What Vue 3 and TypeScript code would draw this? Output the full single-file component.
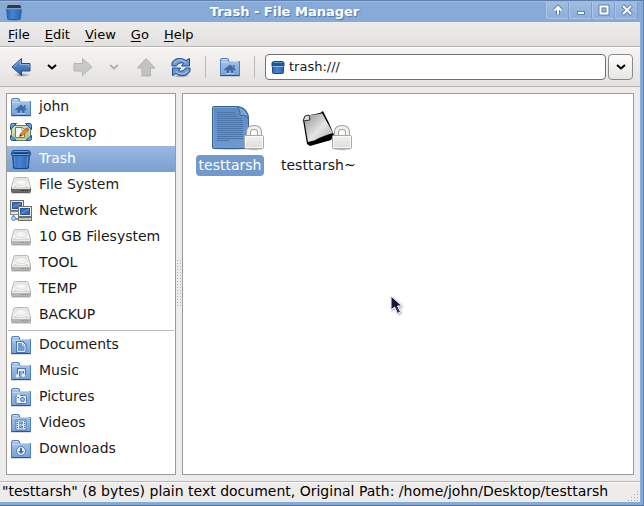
<script setup lang="ts">
import { ref } from 'vue'

interface Place {
  label: string
  icon: string
}

interface FileItem {
  name: string
  icon: string
}

const menus: string[] = ['File', 'Edit', 'View', 'Go', 'Help']

const places: Place[] = [
  { label: 'john', icon: 'home' },
  { label: 'Desktop', icon: 'desktop' },
  { label: 'Trash', icon: 'trash' },
  { label: 'File System', icon: 'drive-dark' },
  { label: 'Network', icon: 'network' },
  { label: '10 GB Filesystem', icon: 'drive' },
  { label: 'TOOL', icon: 'drive' },
  { label: 'TEMP', icon: 'drive' },
  { label: 'BACKUP', icon: 'drive' },
]

const bookmarks: Place[] = [
  { label: 'Documents', icon: 'documents' },
  { label: 'Music', icon: 'music' },
  { label: 'Pictures', icon: 'pictures' },
  { label: 'Videos', icon: 'videos' },
  { label: 'Downloads', icon: 'downloads' },
]

const files: FileItem[] = [
  { name: 'testtarsh', icon: 'text-file' },
  { name: 'testtarsh~', icon: 'backup-file' },
]

const activePlace = ref('Trash')
const activeFile = ref('testtarsh')
const location = ref('trash:///')
</script>

<template>
  <div class="window">
    <svg class="sprites" width="0" height="0" aria-hidden="true">
      <defs>
        <linearGradient id="g-folder" x1="0" y1="0" x2="0" y2="1">
          <stop offset="0" stop-color="#a9c6e8" />
          <stop offset="1" stop-color="#76a1d5" />
        </linearGradient>
        <linearGradient id="g-blue" x1="0" y1="0" x2="0" y2="1">
          <stop offset="0" stop-color="#6c9cd4" />
          <stop offset="1" stop-color="#2a5ea6" />
        </linearGradient>
        <linearGradient id="g-bin" x1="0" y1="0" x2="1" y2="0">
          <stop offset="0" stop-color="#2c66b4" />
          <stop offset=".4" stop-color="#4684cf" />
          <stop offset="1" stop-color="#2a62b0" />
        </linearGradient>
        <linearGradient id="g-drive" x1="0" y1="0" x2="0" y2="1">
          <stop offset="0" stop-color="#e4e4e3" />
          <stop offset="1" stop-color="#f7f7f6" />
        </linearGradient>
        <linearGradient id="g-doc" x1="0" y1="0" x2="0" y2="1">
          <stop offset="0" stop-color="#5b8bc4" />
          <stop offset="1" stop-color="#6d9bd0" />
        </linearGradient>
        <linearGradient id="g-lock" x1="0" y1="0" x2="0" y2="1">
          <stop offset="0" stop-color="#f3f3f2" />
          <stop offset="1" stop-color="#dcddda" />
        </linearGradient>
        <linearGradient id="g-paper" x1="0" y1="0" x2="1" y2="1">
          <stop offset="0" stop-color="#8d8d8d" />
          <stop offset=".55" stop-color="#e4e4e4" />
          <stop offset="1" stop-color="#a8a8a8" />
        </linearGradient>
        <radialGradient id="g-shade">
          <stop offset="0" stop-color="#000" stop-opacity=".4" />
          <stop offset="1" stop-color="#000" stop-opacity="0" />
        </radialGradient>
      </defs>

      <symbol id="folder" viewBox="0 0 22 22">
        <path d="M1 20.5h20" stroke="#000" stroke-opacity=".14" />
        <path d="M1.500 5.500V4Q1.500 2.500 3 2.500H8Q9.500 2.500 9.500 4V5.500H20.500V19.500H1.500Z" fill="url(#g-folder)" stroke="#4d80be" />
        <path d="M2.500 7V6.500H9l1.500-1H19.500" fill="none" stroke="#c2d8f0" />
        <path d="M3 3.500h5" stroke="#c8dcf2" />
        <path d="M1.500 19.500h19" stroke="#28559a" />
      </symbol>

      <symbol id="home" viewBox="0 0 22 22">
        <use href="#folder" width="22" height="22" />
        <path d="M5 13.500l6-5 6 5-1 1L14.500 13.500v3.500h-2.500V14.500h-2v2.500H7.500V13.500l-1.500 1z" fill="#3f6ba6" />
        <path d="M14 9h1.500v3L14 11z" fill="#3f6ba6" />
        <path d="M7 17.500h8" stroke="#bcd4ee" />
      </symbol>

      <symbol id="desktop" viewBox="0 0 22 22">
        <rect x="1.500" y="3.500" width="19" height="15" rx="1" fill="#d0dcb0" stroke="#6a7c60" />
        <path d="M3 13Q8 7 19 5V17H3Z" fill="#b4cc8c" />
        <path d="M5.500 5.500h7l2 2v8h-9z" fill="#fbfbfa" stroke="#777" />
        <path d="M12 6v2.500h2.500" fill="none" stroke="#999" />
        <path d="M9.500 14.500l1-3 5.500-5 2 2.200-5.500 5z" fill="#f28a1c" stroke="#a65608" stroke-width=".6" />
        <path d="M9.500 14.500l.8-2.200 1.500 1.500z" fill="#3b2a12" />
        <path d="M16 6.500l2 2.200 1.200-1.200-2-2z" fill="#e34a2a" />
        <path d="M.5 7.500v-4q0-2 2-2h4zM15.500 1.500h4q2 0 2 2v4zM.5 13.500v3q0 2 2 2h4zM21.500 13.500v3q0 2-2 2h-4z" fill="#6f9fdb" stroke="#1f4f94" stroke-linejoin="round" />
      </symbol>

      <symbol id="trash" viewBox="0 0 22 22">
        <ellipse cx="11" cy="20" rx="10.500" ry="1.800" fill="url(#g-shade)" />
        <path d="M2.500 6L3.500 19Q3.500 20.500 5 20.500H17Q18.500 20.500 18.500 19L19.500 6Z" fill="url(#g-bin)" stroke="#1c4886" />
        <path d="M4.500 8L5 18.500M17.500 8L17 18.500" stroke="#77a9e4" stroke-opacity=".7" />
        <path d="M3.500 2.500H18.500Q19.500 2.500 20 4L20.500 6Q20.500 7.500 19.500 7.500H2.500Q1.500 7.500 1.500 6L2 4Q2.500 2.500 3.500 2.500Z" fill="#2c5c9e" stroke="#1c4886" />
        <path d="M4 5.500h14" stroke="#173f7a" stroke-width="2" />
        <path d="M3.500 3.500h15M2.500 6.500h17" stroke="#6c9fda" />
      </symbol>

      <symbol id="trash-title" viewBox="0 0 18 18">
        <ellipse cx="9" cy="16.500" rx="8" ry="1.500" fill="url(#g-shade)" />
        <path d="M1.500 4.500L2.500 15Q2.500 16.500 4 16.500H14Q15.500 16.500 15.500 15L16.500 4.500Z" fill="url(#g-bin)" stroke="#2c60a8" />
        <path d="M2.500 1.500H15.500L17 5.500H1Z" fill="#1e3a66" stroke="#a2a9b2" />
        <path d="M1 6h16" stroke="#5b91d4" />
      </symbol>

      <symbol id="trash-small" viewBox="0 0 16 16">
        <path d="M2.500 7.500V13.500Q2.500 14.500 3.500 14.500H12.500Q13.500 14.500 13.500 13.500V7.500Z" fill="url(#g-bin)" stroke="#1d4b8c" />
        <path d="M3.500 2.500H12.500Q13.500 2.500 14 4V7.500H2V4Q2.500 2.500 3.500 2.500Z" fill="#27558f" stroke="#1d4b8c" />
        <path d="M3.500 3.500h9" stroke="#6093cf" />
        <path d="M2.500 7.500h11" stroke="#8db9ec" />
      </symbol>

      <symbol id="drive-body" viewBox="0 0 22 22">
        <path d="M1 19.500h20" stroke="#000" stroke-opacity=".14" />
        <path d="M4 4Q4.200 3.500 5.500 3.500H16.500Q17.800 3.500 18 4L20.500 13V14H1.500V13Z" fill="url(#g-drive)" stroke="#b8b8b6" />
        <ellipse cx="11" cy="8.500" rx="5.500" ry="3" fill="#f5f5f4" stroke="#dededd" />
        <path d="M4.500 12.500h2M15.500 12.500h2" stroke="#cfcfcd" />
      </symbol>

      <symbol id="drive" viewBox="0 0 22 22">
        <use href="#drive-body" width="22" height="22" />
        <path d="M1.500 14.500h19v3q0 1-1 1h-17q-1 0-1-1z" fill="#b5b6b4" stroke="#a5a6a4" />
        <path d="M2 14.500h18" stroke="#ececeb" />
        <path d="M11 16.500h8" stroke="#8a8b89" stroke-dasharray="1 1" />
      </symbol>

      <symbol id="drive-dark" viewBox="0 0 22 22">
        <use href="#drive-body" width="22" height="22" />
        <path d="M1.500 14.500h19v3q0 1-1 1h-17q-1 0-1-1z" fill="#6b6c6a" stroke="#5c5d5b" />
        <path d="M2 14.500h18" stroke="#dcdcda" />
        <path d="M11 16.500h8" stroke="#262726" stroke-dasharray="1 1" />
      </symbol>

      <symbol id="network" viewBox="0 0 22 22">
        <rect x=".5" y=".5" width="13" height="10" fill="#e8e8e4" stroke="#6d6f6b" />
        <rect x="2.500" y="2.500" width="9" height="6" fill="#3a6db5" stroke="#2a559a" />
        <path d="M3 7L11 3" stroke="#6d9ddc" />
        <rect x=".5" y="11.500" width="9" height="3" fill="#e6e6e1" stroke="#8b8c88" />
        <path d="M3.500 15v4H8" fill="none" stroke="#6d9bd4" stroke-width="2" />
        <circle cx="3.500" cy="18.500" r="2" fill="#bcd6f4" stroke="#5585c3" />
        <rect x="8.500" y="6.500" width="13" height="10" fill="#f0f0ec" stroke="#6d6f6b" />
        <rect x="10.500" y="8.500" width="9" height="6" fill="#3a6db5" stroke="#2a559a" />
        <path d="M11 13.500L19 9" stroke="#6d9ddc" />
        <rect x="8.500" y="17.500" width="13" height="3" fill="#dfe0d8" stroke="#6d6f6b" />
        <path d="M10 19h10" stroke="#a3a59c" />
      </symbol>

      <symbol id="documents" viewBox="0 0 22 22">
        <use href="#folder" width="22" height="22" />
        <path d="M7.500 8.500h5l2.500 2.500v6.500h-7.500z" fill="#9dbfe5" stroke="#4b78b2" stroke-width="3" />
        <path d="M7.500 8.500h5l2.500 2.500v6.500h-7.500zM12.500 8.500v2.500H15" fill="#6e9bd0" stroke="#e4eefa" />
      </symbol>

      <symbol id="music" viewBox="0 0 22 22">
        <use href="#folder" width="22" height="22" />
        <path d="M8.500 16V9.500h6V15" fill="none" stroke="#4b78b2" stroke-width="3" />
        <path d="M8.500 16V9.500h6V15M8.500 10.500h6" fill="none" stroke="#e4eefa" />
        <circle cx="7.300" cy="16" r="1.700" fill="#e4eefa" />
        <circle cx="13.300" cy="15.300" r="1.700" fill="#e4eefa" />
      </symbol>

      <symbol id="pictures" viewBox="0 0 22 22">
        <use href="#folder" width="22" height="22" />
        <rect x="6" y="9.500" width="10.500" height="8" rx="1" fill="#e4eefa" stroke="#4d7cb6" />
        <path d="M7 9.500h3" stroke="#e4eefa" stroke-width="2" />
        <circle cx="12.500" cy="13.500" r="2" fill="#a9c6e8" stroke="#3e6eab" />
        <path d="M7.500 11.500h1.500" stroke="#3e6eab" />
      </symbol>

      <symbol id="videos" viewBox="0 0 22 22">
        <use href="#folder" width="22" height="22" />
        <rect x="6" y="8" width="10" height="10" fill="#e4eefa" stroke="#4d7cb6" />
        <path d="M9 9.500h4v3H9zM9 13.500h4v3H9z" fill="#6795cc" />
        <path d="M7.500 9v8M14.500 9v8" stroke="#3e6eab" stroke-dasharray="1 1" />
      </symbol>

      <symbol id="downloads" viewBox="0 0 22 22">
        <use href="#folder" width="22" height="22" />
        <circle cx="11" cy="13" r="4.500" fill="#e4eefa" stroke="#4d7cb6" />
        <path d="M10 10h2v3h2l-3 3-3-3h2z" fill="#3e6eab" />
      </symbol>

      <symbol id="lock" viewBox="0 0 22 26">
        <ellipse cx="11" cy="24" rx="11" ry="1.800" fill="url(#g-shade)" />
        <path d="M5.500 12V7Q5.500 2.500 11 2.500T16.500 7V12" fill="none" stroke="#a2a3a0" stroke-width="5" />
        <path d="M5.500 12V7Q5.500 2.500 11 2.500T16.500 7V12" fill="none" stroke="#f0f0ee" stroke-width="3" />
        <rect x="1.500" y="10.500" width="19" height="13" rx="1" fill="url(#g-lock)" stroke="#a9aaa7" />
        <path d="M2.500 11.500h17v11h-17z" fill="none" stroke="#f8f8f7" />
      </symbol>

      <symbol id="text-file" viewBox="0 0 54 48">
        <ellipse cx="20" cy="43.500" rx="20" ry="2" fill="url(#g-shade)" />
        <path d="M2.500 1.500H27Q37.500 3 37.500 14V43.500H2.500Q1.500 43.500 1.500 42.500V2.500Q1.500 1.500 2.500 1.500Z" fill="url(#g-doc)" stroke="#37608f" />
        <path d="M2.500 42V2.500H27" fill="none" stroke="#7ba5d6" />
        <path d="M6 7.500H24M6 9.500H25M6 11.500H27M6 13.500H31M6 15.500H32M6 17.500H32M6 19.500H32M6 21.500H32M6 23.500H32M6 25.500H32M6 27.500H32M6 29.500H32M6 31.500H32M6 33.500H32M6 35.500H18" stroke="#4a76a9" />
        <path d="M25.500 1.500Q29.500 4 29 10.500Q36.500 9.500 37.500 14Q37 3 25.500 1.500Z" fill="#7aa5d6" stroke="#3c6798" />
        <use href="#lock" x="32" y="20" width="22" height="26" />
      </symbol>

      <symbol id="backup-file" viewBox="0 0 54 48">
        <path d="M4 15L8 39L11 41L32 35L35 30L30 18L24 6L21 8L6 11Z" fill="#000" />
        <path d="M5 14L10 10L21 9L23 8L34 28L29 32L9 37Z" fill="url(#g-paper)" />
        <path d="M34 28Q24 31 18 34L11 40L31 35Z" fill="#000" />
        <path d="M4 16L6 11L10 10L11 15Z" fill="#dedede" stroke="#333" />
        <use href="#lock" x="32" y="20" width="22" height="26" />
      </symbol>

      <symbol id="arrow-left" viewBox="0 0 22 22">
        <ellipse cx="12" cy="19" rx="9" ry="2" fill="url(#g-shade)" />
        <path d="M2 11L11.500 2.500V7.500H20V15H11.500V19.500Z" fill="url(#g-blue)" stroke="#204a87" stroke-linejoin="round" />
        <path d="M3.500 11L10.500 4.700V8.500H19V11" fill="none" stroke="#8db4e4" />
      </symbol>

      <symbol id="arrow-right" viewBox="0 0 22 22">
        <path d="M20 11L10.500 2.500V7.500H2V15H10.500V19.500Z" fill="#c9cac8" stroke="#b5b6b4" stroke-linejoin="round" />
      </symbol>

      <symbol id="arrow-up" viewBox="0 0 22 22">
        <ellipse cx="11" cy="20" rx="8" ry="1.500" fill="url(#g-shade)" opacity=".35" />
        <path d="M11 2.500L20 12H15.500V19.500H7V12H2.500Z" fill="#c3c4c2" stroke="#b2b3b1" stroke-linejoin="round" />
      </symbol>

      <symbol id="reload" viewBox="0 0 22 22">
        <ellipse cx="11" cy="20" rx="9" ry="1.800" fill="url(#g-shade)" />
        <path id="reload-half" d="M2 10V7Q4 2.500 9.500 2.500Q13.500 2.500 16 4.500L19.500 2.500V10H11.500L13.500 7.500Q12 6.500 10 7Q7 8 6.500 10Z" fill="#6c9bd3" stroke="#204a87" stroke-linejoin="round" />
        <use href="#reload-half" transform="rotate(180 11 11)" />
        <path d="M4 7.500Q6 4 10 4Q13.500 4 16 6.500M18 14.500Q16 18 12 18Q8.500 18 6 15.500" fill="none" stroke="#a9c8ee" />
      </symbol>

      <symbol id="chevron" viewBox="0 0 12 8">
        <path d="M2 2L6 5.500L10 2" fill="none" stroke="currentColor" stroke-width="2" />
      </symbol>
    </svg>

    <header class="titlebar">
      <svg class="title-icon" aria-hidden="true"><use href="#trash-title" /></svg>
      <h1 class="title">Trash - File Manager</h1>
      <div class="window-buttons">
        <button type="button" aria-label="Shade">
          <svg viewBox="0 0 12 12"><path d="M6 11V4M2.500 6.500L6 3L9.500 6.500" stroke="#5f82b2" stroke-width="4" fill="none" /><path d="M6 10.500V4M2.500 6.500L6 3L9.500 6.500" stroke="#fff" stroke-width="2" fill="none" /></svg>
        </button>
        <button type="button" aria-label="Minimize">
          <svg viewBox="0 0 12 12"><rect x="2.500" y="7.500" width="7" height="3" fill="#fff" stroke="#5f82b2" /></svg>
        </button>
        <button type="button" aria-label="Maximize">
          <svg viewBox="0 0 12 12"><rect x="2.500" y="2.500" width="7" height="7" fill="none" stroke="#5f82b2" stroke-width="4" /><rect x="2.500" y="2.500" width="7" height="7" fill="none" stroke="#fff" stroke-width="2" /></svg>
        </button>
        <button type="button" aria-label="Close">
          <svg viewBox="0 0 12 12"><path d="M1.500 1.500L10.500 10.500M10.500 1.500L1.500 10.500" stroke="#5f82b2" stroke-width="4" /><path d="M2 2L10 10M10 2L2 10" stroke="#fff" stroke-width="2" /></svg>
        </button>
      </div>
    </header>

    <div class="client">
      <nav class="menubar" aria-label="Menu">
        <button v-for="menu in menus" :key="menu" type="button"><u>{{ menu[0] }}</u>{{ menu.slice(1) }}</button>
      </nav>

      <div class="toolbar">
        <div class="tool-group history">
          <button type="button" class="tool" aria-label="Back"><svg><use href="#arrow-left" /></svg></button>
          <button type="button" class="tool-more" aria-label="Back history"><svg><use href="#chevron" /></svg></button>
          <button type="button" class="tool" aria-label="Forward" disabled><svg><use href="#arrow-right" /></svg></button>
          <button type="button" class="tool-more" aria-label="Forward history" disabled><svg><use href="#chevron" /></svg></button>
        </div>
        <div class="tool-group">
          <button type="button" class="tool" aria-label="Open parent" disabled><svg><use href="#arrow-up" /></svg></button>
          <button type="button" class="tool" aria-label="Reload"><svg><use href="#reload" /></svg></button>
        </div>
        <div class="tool-group home-group">
          <button type="button" class="tool" aria-label="Home"><svg><use href="#home" /></svg></button>
        </div>
        <div class="location">
          <label class="entry">
            <svg aria-hidden="true"><use href="#trash-small" /></svg>
            <input v-model="location" type="text" aria-label="Location" spellcheck="false" />
          </label>
          <button type="button" class="entry-more" aria-label="Recent locations"><svg><use href="#chevron" /></svg></button>
        </div>
      </div>

      <div class="panes">
        <aside class="side">
          <button
            v-for="place in places"
            :key="place.label"
            type="button"
            class="place"
            :class="{ active: place.label === activePlace }"
            @click="activePlace = place.label"
          >
            <svg aria-hidden="true"><use :href="'#' + place.icon" /></svg><span>{{ place.label }}</span>
          </button>
          <hr />
          <button
            v-for="place in bookmarks"
            :key="place.label"
            type="button"
            class="place"
            :class="{ active: place.label === activePlace }"
            @click="activePlace = place.label"
          >
            <svg aria-hidden="true"><use :href="'#' + place.icon" /></svg><span>{{ place.label }}</span>
          </button>
        </aside>
        <div class="splitter">
          <svg viewBox="0 0 6 48" aria-hidden="true">
            <path d="M1.500 0V48M4.500 0V48" stroke="#b3b1af" stroke-dasharray="1 2" />
          </svg>
        </div>
        <main class="files">
          <button
            v-for="file in files"
            :key="file.name"
            type="button"
            class="file"
            :class="{ active: file.name === activeFile }"
            @click="activeFile = file.name"
          >
            <svg aria-hidden="true"><use :href="'#' + file.icon" /></svg>
            <span>{{ file.name }}</span>
          </button>
          <svg class="pointer" viewBox="0 0 14 22" aria-hidden="true">
            <path d="M1 1V15L4.500 12L7.500 18.500L10.500 17L7.500 11H12Z" fill="#14163a" stroke="#fff" />
            <path d="M6 12L9 17" stroke="#3c4688" />
          </svg>
        </main>
      </div>

      <footer class="statusbar">
        <span>"testtarsh" (8 bytes) plain text document, Original Path: /home/john/Desktop/testtarsh</span>
        <svg class="resize" viewBox="0 0 12 12" aria-hidden="true">
          <path d="M0 10.500h12M3 7.500h9M6 4.500h6M9 1.500h3" stroke="#a9a8a6" stroke-dasharray="1 2" />
        </svg>
      </footer>
    </div>
  </div>
</template>

<style>
body {
  margin: 0;
}
</style>

<style scoped>
.window {
  box-sizing: border-box;
  min-height: 100vh;
  display: flex;
  flex-direction: column;
  background: #86abd9;
  border-top: 1px solid #5f80ac;
  border-right: 1px solid #5f80ac;
  border-bottom: 1px solid #4e719f;
  padding: 0 3px 3px 0;
  font-family: "DejaVu Sans", sans-serif;
  font-size: 13px;
  color: #1a1a1a;
}

.sprites {
  display: block;
}

button {
  font: inherit;
  color: inherit;
  background: none;
  border: 0;
  padding: 0;
  margin: 0;
}

.titlebar {
  display: flex;
  height: 21px;
  align-items: center;
  box-shadow: inset 0 1px #9dbbe2;
}

.title-icon {
  width: 18px;
  height: 18px;
  margin-left: 5px;
}

.title {
  flex: 1;
  margin: 0;
  text-align: center;
  font-size: 13px;
  line-height: 20px;
  font-weight: bold;
  color: #fff;
  text-shadow: 1px 1px 1px #5274a4;
}

.window-buttons {
  display: flex;
  align-self: flex-start;
  padding: 1px 2px 0 0;
}

.window-buttons button {
  box-sizing: border-box;
  width: 23px;
  height: 17px;
  display: flex;
  align-items: center;
  justify-content: center;
  background: linear-gradient(#a1bde2, #8eafd9);
  border: 1px solid #adc6e8;
  border-top: 0;
  border-right-color: #7f9fca;
  border-radius: 0 0 3px 3px;
}

.window-buttons svg {
  width: 12px;
  height: 12px;
}

.client {
  flex: 1;
  display: flex;
  flex-direction: column;
  background: #edeceb;
}

.menubar {
  display: flex;
  gap: 15px;
  height: 24px;
  padding: 0 8px;
  background: linear-gradient(#edeceb, #e2e1df);
  border-bottom: 1px solid #bab8b6;
  color: #000;
}

.menubar u {
  text-underline-offset: 2px;
}

.toolbar {
  display: flex;
  align-items: center;
  height: 39px;
  background: linear-gradient(#f6f5f4, #e3e2e0);
  border-bottom: 1px solid #bab8b6;
  box-shadow: inset 0 1px #fff;
}

.tool-group {
  display: flex;
  align-items: center;
  gap: 13px;
  padding: 0 13px;
}

.history {
  gap: 12px;
  padding: 0 0 0 10px;
}

.home-group {
  border-left: 1px solid #bdbbb9;
  border-right: 1px solid #bdbbb9;
}

.tool svg {
  display: block;
  width: 22px;
  height: 22px;
}

.tool-more {
  width: 16px;
  color: #000;
}

.tool-more:disabled {
  color: #aeadab;
}

.tool-more svg,
.entry-more svg {
  display: block;
  width: 12px;
  height: 8px;
  margin: 0 auto;
}

.location {
  flex: 1;
  display: flex;
  gap: 2px;
  padding: 0 7px 0 10px;
}

.entry {
  flex: 1;
  box-sizing: border-box;
  display: flex;
  align-items: center;
  gap: 3px;
  height: 26px;
  padding: 0 4px;
  background: #fff;
  border: 1px solid #73716f;
  border-radius: 4px;
}

.entry svg {
  width: 16px;
  height: 16px;
}

.entry input {
  flex: 1;
  min-width: 0;
  padding: 0;
  border: 0;
  outline: 0;
  background: none;
  font: inherit;
  color: inherit;
}

.entry-more {
  box-sizing: border-box;
  width: 25px;
  height: 26px;
  border: 1px solid #8c8a88;
  border-radius: 4px;
  background: linear-gradient(#fdfdfd, #e7e6e5);
  color: #000;
}

.panes {
  flex: 1;
  display: flex;
  padding: 6px;
  font-size: 14px;
}

.side {
  box-sizing: border-box;
  width: 170px;
  flex: none;
  background: #fff;
  border: 1px solid #9d9b99;
}

.place {
  display: flex;
  align-items: center;
  gap: 7px;
  width: 100%;
  height: 26px;
  padding: 0 3px;
  text-align: left;
  white-space: nowrap;
}

.place span {
  padding-bottom: 2px;
}

.place svg {
  flex: none;
  width: 22px;
  height: 22px;
}

.place.active {
  background: linear-gradient(#9ab8e2, #7a9fd0);
  color: #fff;
}

.side hr {
  height: 1px;
  margin: 2px 1px 1px;
  border: 0;
  background: #bdbbb9;
}

.splitter {
  width: 6px;
  display: flex;
  align-items: center;
}

.splitter svg {
  width: 6px;
  height: 48px;
}

.files {
  flex: 1;
  position: relative;
  display: flex;
  align-items: flex-start;
  gap: 13px;
  padding: 11px 12px;
  background: #fff;
  border: 1px solid #9d9b99;
}

.file {
  display: flex;
  flex-direction: column;
  align-items: center;
  gap: 2px;
}

.file svg {
  width: 54px;
  height: 48px;
  margin-left: 16px;
}

.file span {
  padding: 0 3px;
  line-height: 21px;
  border-radius: 4px;
}

.file.active span {
  background: #7099cd;
  color: #fff;
}

.pointer {
  position: absolute;
  left: 207px;
  top: 201px;
  width: 14px;
  height: 22px;
  filter: drop-shadow(1px 1px 1px rgba(0, 0, 0, 0.35));
}

.statusbar {
  display: flex;
  align-items: center;
  justify-content: space-between;
  height: 20px;
  padding-left: 2px;
  border-top: 1px solid #bab8b6;
  box-shadow: inset 0 1px #fafafa;
  font-size: 14px;
  color: #000;
  white-space: nowrap;
}

.statusbar span {
  padding-bottom: 2px;
}

.resize {
  width: 12px;
  height: 12px;
  align-self: flex-end;
}
</style>
